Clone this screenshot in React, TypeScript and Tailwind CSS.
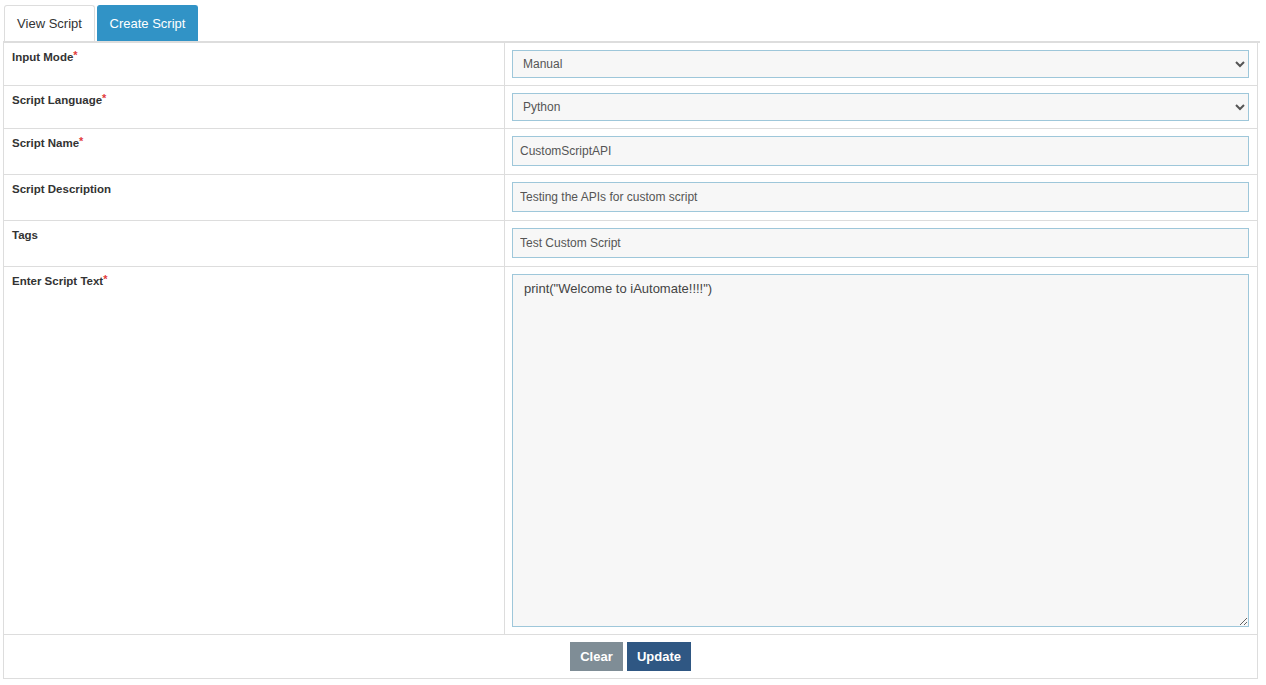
import { useState } from 'react';

const labelCls = 'w-[501px] shrink-0 border-r border-[#ddd] px-[8px] pt-[6px] text-[11.5px] font-bold leading-[16px] text-[#333]';
const boxCls = 'w-full border border-[#9ec7da] bg-[#f7f7f7] text-[12px] text-[#555] outline-none';

function Label({ text, required }: { text: string; required?: boolean }) {
  return (
    <div className={labelCls}>
      {text}
      {required && <span className="relative top-[-2px] text-[11px] text-[#e23b3b]">*</span>}
    </div>
  );
}

export default function App() {
  const [tab, setTab] = useState<'view' | 'create'>('create');
  const [name, setName] = useState('CustomScriptAPI');
  const [desc, setDesc] = useState('Testing the APIs for custom script');
  const [tags, setTags] = useState('Test Custom Script');
  const [code, setCode] = useState('print("Welcome to iAutomate!!!!")');

  return (
    <div className="min-h-screen bg-white font-['Liberation_Sans',Arial,sans-serif]">
      <div className="ml-[3px] w-[1257px] pt-[5px]">
        {/* Tabs */}
        <div className="flex gap-[2px] border-b-2 border-[#ddd] pl-[1px]">
          <button
            onClick={() => setTab('view')}
            className={`h-[36px] w-[91px] rounded-t-[3px] border border-b-0 text-[13px] ${
              tab === 'view' ? 'border-[#3193c6] bg-[#3193c6] text-white' : 'border-[#ddd] bg-white text-[#333]'
            }`}
          >
            View Script
          </button>
          <button
            onClick={() => setTab('create')}
            className={`h-[36px] w-[101px] rounded-t-[3px] border border-b-0 text-[13px] ${
              tab === 'create' ? 'border-[#3193c6] bg-[#3193c6] text-white' : 'border-[#ddd] bg-white text-[#333]'
            }`}
          >
            Create Script
          </button>
        </div>

        {/* Form table */}
        <div className="w-[1255px] border-x border-b border-[#ddd]">
          <div className="flex border-b border-[#ddd]">
            <Label text="Input Mode" required />
            <div className="flex-1 pl-[7px] pr-[8px] py-[7px]">
              <select className={`${boxCls} h-[28px] px-[6px]`} defaultValue="Manual">
                <option>Manual</option>
                <option>Upload</option>
              </select>
            </div>
          </div>

          <div className="flex border-b border-[#ddd]">
            <Label text="Script Language" required />
            <div className="flex-1 pl-[7px] pr-[8px] py-[7px]">
              <select className={`${boxCls} h-[28px] px-[6px]`} defaultValue="Python">
                <option>Python</option>
                <option>PowerShell</option>
                <option>Shell</option>
              </select>
            </div>
          </div>

          <div className="flex border-b border-[#ddd]">
            <Label text="Script Name" required />
            <div className="flex-1 pl-[7px] pr-[8px] pt-[7px] pb-[8px]">
              <input className={`${boxCls} h-[30px] px-[7px]`} value={name} onChange={(e) => setName(e.target.value)} />
            </div>
          </div>

          <div className="flex border-b border-[#ddd]">
            <Label text="Script Description" />
            <div className="flex-1 pl-[7px] pr-[8px] pt-[7px] pb-[8px]">
              <input className={`${boxCls} h-[30px] px-[7px]`} value={desc} onChange={(e) => setDesc(e.target.value)} />
            </div>
          </div>

          <div className="flex border-b border-[#ddd]">
            <Label text="Tags" />
            <div className="flex-1 pl-[7px] pr-[8px] pt-[7px] pb-[8px]">
              <input className={`${boxCls} h-[30px] px-[7px]`} value={tags} onChange={(e) => setTags(e.target.value)} />
            </div>
          </div>

          <div className="flex border-b border-[#ddd]">
            <Label text="Enter Script Text" required />
            <div className="flex-1 pl-[7px] pr-[8px] py-[7px]">
              <textarea
                className="block h-[353px] w-full border border-[#9ec7da] bg-[#f7f7f7] px-[11px] py-[4px] text-[13px] text-[#444] outline-none"
                value={code}
                onChange={(e) => setCode(e.target.value)}
              />
            </div>
          </div>

          {/* Actions */}
          <div className="flex justify-center gap-[4px] py-[7px]">
            <button
              onClick={() => {
                setName('');
                setDesc('');
                setTags('');
                setCode('');
              }}
              className="h-[29px] w-[53px] bg-[#7f8d96] text-[13px] font-bold text-white"
            >
              Clear
            </button>
            <button className="h-[29px] w-[64px] bg-[#2f5783] text-[13px] font-bold text-white">Update</button>
          </div>
        </div>
      </div>
    </div>
  );
}
